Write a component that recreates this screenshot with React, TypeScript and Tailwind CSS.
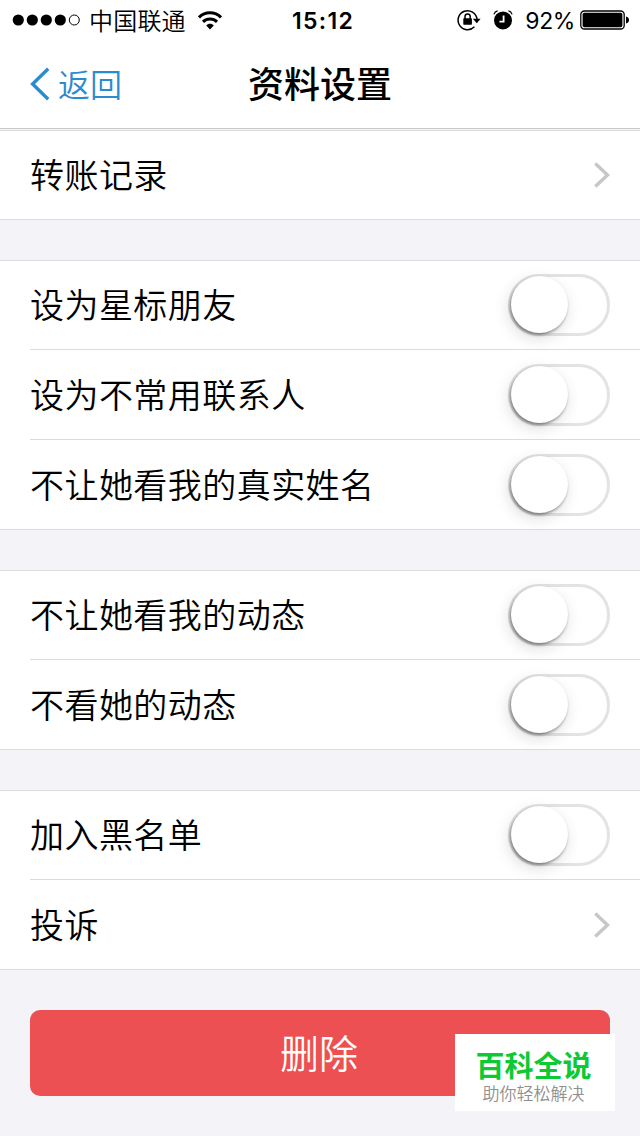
import type { ReactNode } from "react"

type RowItem = {
    label: string
    kind: "link" | "switch"
}

const groups: RowItem[][] = [
    [
        { label: "设为星标朋友", kind: "switch" },
        { label: "设为不常用联系人", kind: "switch" },
        { label: "不让她看我的真实姓名", kind: "switch" },
    ],
    [
        { label: "不让她看我的动态", kind: "switch" },
        { label: "不看她的动态", kind: "switch" },
    ],
    [
        { label: "加入黑名单", kind: "switch" },
        { label: "投诉", kind: "link" },
    ],
]

function StatusBar() {
    return (
        <div className="grid h-10 grid-cols-[1fr_auto_1fr] items-center pl-3 pr-3 text-black">
            <div className="flex items-center">
                <svg className="h-3 w-[69px]" viewBox="0 0 69 12">
                    <circle cx="6.3" cy="6" r="5.6" />
                    <circle cx="20.3" cy="6" r="5.6" />
                    <circle cx="34.3" cy="6" r="5.6" />
                    <circle cx="48.3" cy="6" r="5.6" />
                    <circle cx="62.3" cy="6" r="5" fill="none" stroke="black" strokeWidth="1" />
                </svg>
                <span className="ml-2 text-2xl font-[350] leading-none tracking-[0.2px]">中国联通</span>
                <svg className="ml-[12px] h-[19px] w-6" viewBox="0 0 24 19" fill="none" stroke="black" strokeWidth="3">
                    <path d="M1 6.4C7 .3 17 .3 23 6.4" />
                    <path d="M5 10.8C9 7 15 7 19 10.8" />
                    <path d="M8.2 14.4C10.2 12.2 13.8 12.2 15.8 14.4L12 18.4Z" fill="black" stroke="none" />
                </svg>
            </div>
            <span className="ml-1.5 pt-0.5 font-[Inter] text-[23px] font-semibold leading-none tracking-[1.3px]">15:12</span>
            <div className="flex items-center justify-end">
                <svg className="h-[22px] w-6 shrink-0" viewBox="0 0 24 22" fill="none" stroke="black">
                    <path d="M17.4 17.8A9.5 9.5 0 1 1 20 10" strokeWidth="1.5" />
                    <path d="M15.8 9.8H23.6L19.8 14.2Z" fill="black" stroke="none" />
                    <rect x="6.3" y="9.3" width="8.6" height="6.4" rx="0.6" fill="black" stroke="none" />
                    <path d="M8 10V7.6a2.6 2.6 0 0 1 5.2 0V10" strokeWidth="1.5" />
                </svg>
                <svg className="ml-3 h-5 w-5 shrink-0" viewBox="0 0 20 20" fill="none">
                    <circle cx="10" cy="10.4" r="9" fill="black" />
                    <path d="M10.6 5.4V11.6H6.4" stroke="white" strokeWidth="1.8" />
                    <path d="M0.9 4.4Q1.8 1.6 4.6 0.9M19.1 4.4Q18.2 1.6 15.4 0.9" stroke="white" strokeWidth="3.4" />
                    <path d="M0.9 4.4Q1.8 1.6 4.6 0.9M19.1 4.4Q18.2 1.6 15.4 0.9" stroke="black" strokeWidth="1.2" />
                </svg>
                <span className="ml-3 pt-0.5 font-[Inter] text-[23px] leading-none tracking-[-0.4px]">92%</span>
                <svg className="-mr-px ml-[5px] h-5 w-[49px] shrink-0" viewBox="0 0 49 20">
                    <rect x="0.8" y="1" width="43.4" height="18" rx="3.6" fill="none" stroke="black" strokeWidth="1.3" />
                    <rect x="2.6" y="2.7" width="39.8" height="14.6" rx="1.8" />
                    <path d="M46 6.6Q49 7.4 49 10T46 13.4Z" />
                </svg>
            </div>
        </div>
    )
}

function Switch() {
    return (
        <button
            type="button"
            role="switch"
            aria-checked={false}
            className="flex h-[62px] w-[102px] items-start rounded-full border-3 border-[#e3e3e3] bg-white"
        >
            <span className="-mt-px size-[57px] rounded-full bg-white shadow-[-1px_2px_3px_rgba(0,0,0,0.4),-2px_5px_16px_rgba(0,0,0,0.14)]" />
        </button>
    )
}

function Chevron() {
    return (
        <svg className="h-7 w-[17px]" viewBox="0 0 17 28" fill="none" stroke="#c7c7c7" strokeWidth="3.4">
            <path d="M2.3 2.5L14.5 14L2.3 25.5" />
        </svg>
    )
}

function Row({ item }: { item: RowItem }) {
    return (
        <div className="group pl-[30px]">
            <div className="flex h-[90px] items-center justify-between border-b border-[#dcdcdf] pr-[30px] group-last:-ml-[30px] group-last:pl-[30px]">
                <span className="pb-0.5 text-[34px] font-[350] leading-none tracking-[0.45px]">{item.label}</span>
                {item.kind === "switch" ? <Switch /> : <Chevron />}
            </div>
        </div>
    )
}

function Group({ children }: { children: ReactNode }) {
    return <section className="-mb-px border-t border-[#dcdcdf] bg-white [&>div:first-child>div]:h-[89px]">{children}</section>
}

export default function App() {
    return (
        <div className="h-[1136px] w-[640px] overflow-hidden bg-[#f3f3f8] font-['Noto_Sans_CJK_SC',sans-serif] text-black">
            {/* Navigation */}
            <header className="h-[129px] border-b border-[#c8c8c8] bg-white">
                <StatusBar />
                <nav className="grid h-[88px] grid-cols-[1fr_auto_1fr] items-center px-[30px]">
                    <a href="#" className="flex items-center text-[#2a8ccf]">
                        <svg className="h-[34px] w-5" viewBox="0 0 20 34" fill="none" stroke="currentColor" strokeWidth="3.4">
                            <path d="M18.2 1.8L2.6 17L18.2 32.2" />
                        </svg>
                        <span className="ml-2 pb-[3px] text-[32px] font-[350] leading-none">返回</span>
                    </a>
                    <h1 className="pb-1 text-4xl font-medium leading-none">资料设置</h1>
                </nav>
            </header>

            {/* Settings */}
            <main className="flex flex-col gap-[41px] pt-px">
                <Group>
                    <Row item={{ label: "转账记录", kind: "link" }} />
                </Group>
                {groups.map((rows) => (
                    <Group key={rows[0].label}>
                        {rows.map((item) => (
                            <Row key={item.label} item={item} />
                        ))}
                    </Group>
                ))}
            </main>

            {/* Delete */}
            <div className="relative mx-[30px] mt-[41px]">
                <button
                    type="button"
                    className="flex h-[86px] w-full items-center justify-center rounded-[10px] bg-[#ec5052] pb-1 pr-0.5 text-[39px] font-[350] leading-none text-white"
                >
                    删除
                </button>
                <div className="absolute -right-[5px] top-6 flex h-[77px] w-40 flex-col items-center bg-white pr-[3px] pt-[15px]">
                    <strong className="text-[29px] font-bold leading-[30px] text-[#0dc934]">百科全说</strong>
                    <span className="mt-1 text-[17px] font-[350] leading-5 text-[#909090]">助你轻松解决</span>
                </div>
            </div>
        </div>
    )
}
